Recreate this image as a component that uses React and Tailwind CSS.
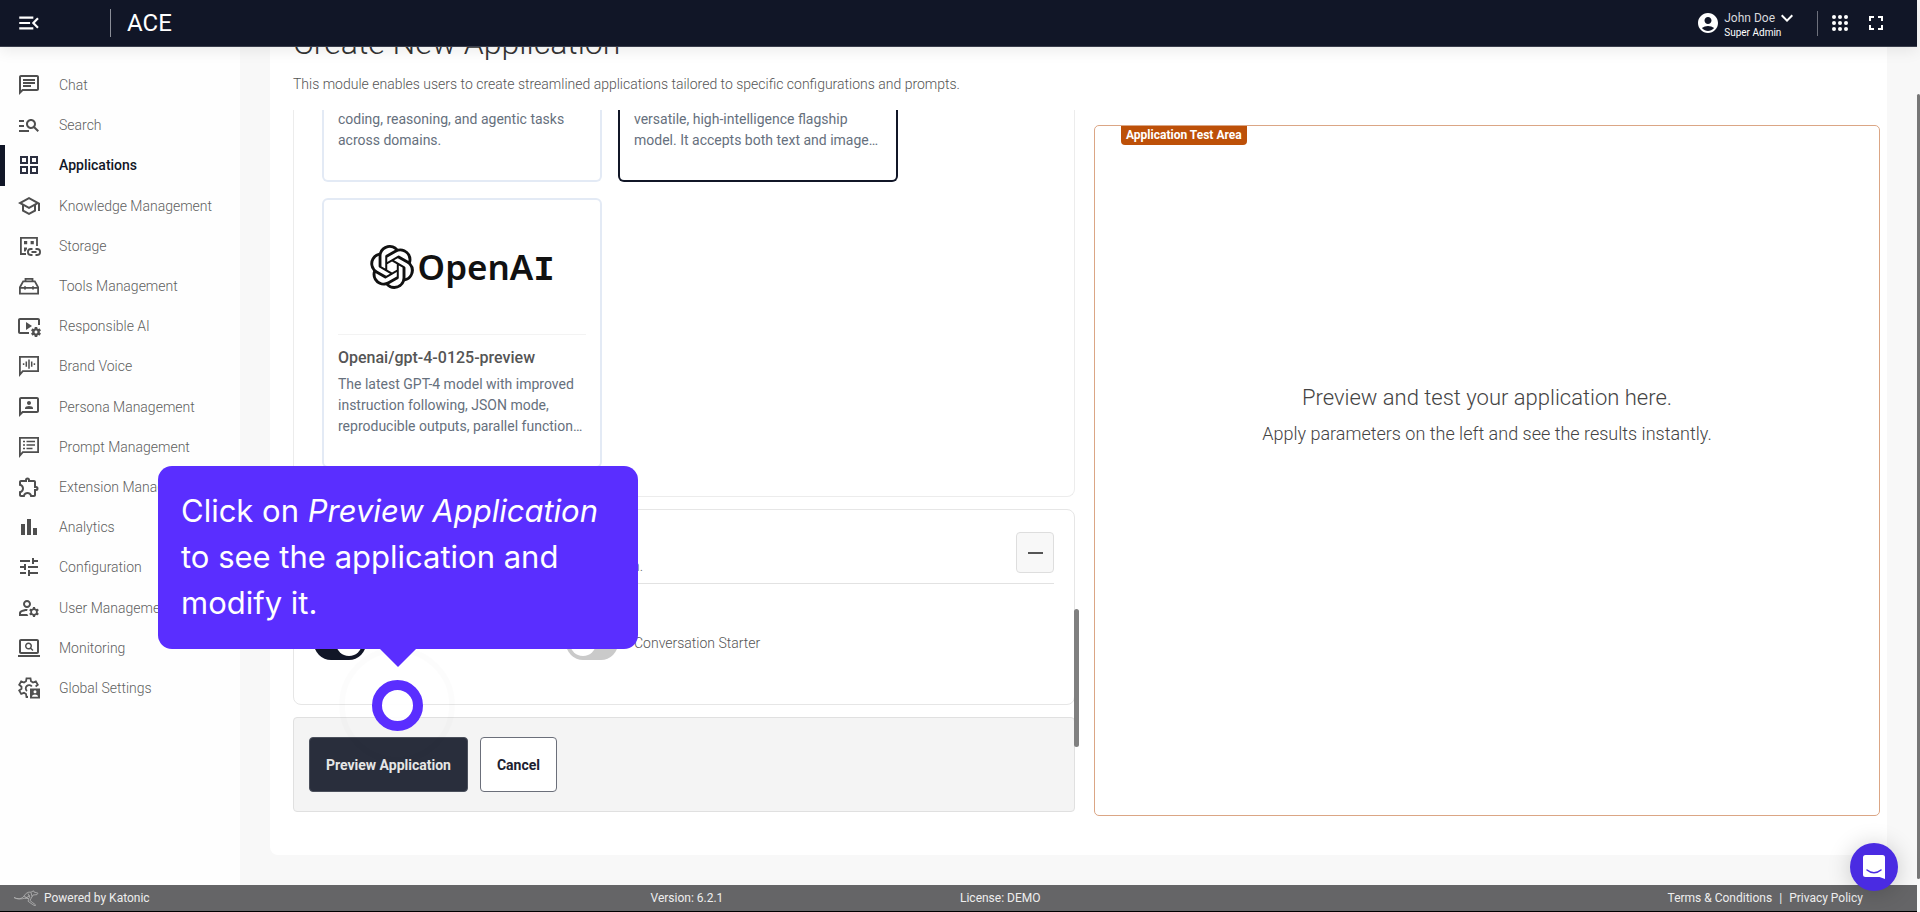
import React, { useState } from 'react';
import {
  MdMenuOpen,
  MdOutlineChat,
  MdManageSearch,
  MdOutlineGridView,
  MdOutlineSchool,
  MdOutlineVideoSettings,
  MdOutline3P,
  MdOutlineExtension,
  MdBarChart,
  MdTune,
  MdOutlineManageAccounts,
  MdOutlineScreenSearchDesktop,
  MdAccountCircle,
  MdKeyboardArrowDown,
  MdFullscreen,
} from 'react-icons/md';
import { SiOpenai } from 'react-icons/si';

const StorageIcon = ({ className }) => (
  <svg viewBox="0 0 24 24" className={className} fill="none" stroke="currentColor" strokeWidth="1.8">
    <path d="M20 12V3.9H3.9V20H9" />
    <path d="M7 7h3.2v3.2H7zM13.6 7h3.2v3.2h-3.2zM7 13.5h3v1.5l-1.5 2.500H7z" fill="currentColor" stroke="none" />
    <path d="M15.500 15h-1.600a3 3 0 0 0 0 6h1.600M18.500 15h1.600a3 3 0 0 1 0 6h-1.600M14.500 18h5" />
  </svg>
);

const ToolboxIcon = ({ className }) => (
  <svg viewBox="0 0 24 24" className={className} fill="none" stroke="currentColor" strokeWidth="1.8">
    <path d="M2.900 19.600v-6.400L6.200 7.400h11.600l3.300 5.800v6.400zM8.500 7.400V4.900h7v2.500M2.900 13.800h18.200M8 12.200v3.200M16 12.200v3.200" />
  </svg>
);

const VoiceIcon = ({ className }) => (
  <svg viewBox="0 0 24 24" className={className} fill="none" stroke="currentColor" strokeWidth="1.8">
    <path d="M2.900 20.500V2.900h18.200v14.200H5.800z" />
    <path d="M6.600 9.200v1.800M9.300 7.500v5.200M12 5.500v9.200M14.700 7.500v5.200M17.400 9.200v1.800" strokeWidth="1.500" />
  </svg>
);

const PromptIcon = ({ className }) => (
  <svg viewBox="0 0 24 24" className={className} fill="none" stroke="currentColor" strokeWidth="1.8">
    <path d="M2.900 20.500V2.900h18.200v14.200H5.800z" />
    <path d="M6 6.500h2M6 10h2M6 13.500h2M9.500 6.500h8.500M9.500 10h8.500M9.500 13.500h6" strokeWidth="1.600" />
  </svg>
);

const GlobalSettingsIcon = ({ className }) => (
  <svg viewBox="0 0 24 24" className={className} fill="none" stroke="currentColor" strokeWidth="1.8">
    <path d="M11 21H9.500l-.5-3-2-1.200-2.800 1.100-2-3.400 2.300-1.800v-2L2.200 8.800l2-3.400L7 6.500l2-1.200.5-2.900h4l.5 2.900 2 1.200 2.800-1.100 2 3.400-2.200 1.700" />
    <path d="M10 15a3.300 3.300 0 1 1 4.800-4.400" />
    <path d="M13 12.500h10v10H13zM18 14.200a1.500 1.500 0 1 0 0 3 1.500 1.500 0 0 0 0-3zM15 20.800h6c0-1.600-1.500-2.300-3-2.300s-3 .7-3 2.300z" fill="currentColor" fillRule="evenodd" stroke="none" />
  </svg>
);

const KangarooIcon = ({ className }) => (
  <svg viewBox="0 0 26 16" className={className} fill="none" stroke="currentColor" strokeWidth="0.8">
    <path d="M1 7.500c4 2 8 1.500 10-1.500 1.500-2.500 4-4.500 7-3.800l2.500-1.400.5 1.200 4 1.200-1 1.400-4 .4-1.700 3-1.300 2.500 2.500 2 3 2.300-.5 1.200-4-2.600-3-2.200 1-2.500-3.500-.7c-4 1.200-8.500 1.500-11.500-.5z" />
    <path d="M11 6l4 2.500M15 3.500l2 4.500M18 2.500l1 4M12 8.500l5-3" />
  </svg>
);

const navItems = [
  { label: 'Chat', icon: MdOutlineChat },
  { label: 'Search', icon: MdManageSearch },
  { label: 'Applications', icon: MdOutlineGridView, active: true },
  { label: 'Knowledge Management', icon: MdOutlineSchool },
  { label: 'Storage', icon: StorageIcon },
  { label: 'Tools Management', icon: ToolboxIcon },
  { label: 'Responsible AI', icon: MdOutlineVideoSettings },
  { label: 'Brand Voice', icon: VoiceIcon },
  { label: 'Persona Management', icon: MdOutline3P },
  { label: 'Prompt Management', icon: PromptIcon },
  { label: 'Extension Management', icon: MdOutlineExtension },
  { label: 'Analytics', icon: MdBarChart },
  { label: 'Configuration', icon: MdTune },
  { label: 'User Management', icon: MdOutlineManageAccounts },
  { label: 'Monitoring', icon: MdOutlineScreenSearchDesktop },
  { label: 'Global Settings', icon: GlobalSettingsIcon },
];

function Header() {
  return (
    <header className="relative z-10 flex h-[47px] shrink-0 items-center border-b border-[#3a3e4c] bg-[#111627] text-white shadow-[0_4px_14px_rgba(0,0,0,0.08)]">
      <button aria-label="Collapse menu" className="ml-4">
        <MdMenuOpen className="h-[26px] w-[26px]" />
      </button>
      <div className="ml-[68px] h-7 w-px bg-[#8b8e98]" />
      <span className="ml-4 text-2xl">ACE</span>
      <div className="ml-auto flex items-center">
        <MdAccountCircle className="h-6 w-6" />
        <button className="ml-1 mt-1 text-left">
          <span className="flex h-4 items-center text-xs text-[#d8d9dd]">
            John Doe
            <MdKeyboardArrowDown className="h-6 w-6 text-white" />
          </span>
          <span className="block text-[10px] leading-[14px]">Super Admin</span>
        </button>
        <div className="ml-[18px] h-[25px] w-px bg-[#6d707c]" />
        <button aria-label="Apps" className="ml-[14px]">
          <svg viewBox="0 0 16 16" className="h-4 w-4" fill="currentColor">
            {[2, 8, 14].map((y) => [2, 8, 14].map((x) => <circle key={`${x}-${y}`} cx={x} cy={y} r="2" />))}
          </svg>
        </button>
        <button aria-label="Full screen" className="ml-4 mr-[29px]">
          <MdFullscreen className="h-6 w-6" />
        </button>
      </div>
    </header>
  );
}

function Sidebar() {
  return (
    <nav className="w-60 shrink-0 bg-[#fefefe] pt-[18px]">
      <div className="flex h-[643px] flex-col">
        {navItems.map(({ label, icon: Icon, active }) => (
          <a
            key={label}
            href="#"
            className={`flex flex-1 items-center border-l-[5px] pl-3 text-sm ${
              active ? 'border-[#111627] font-medium text-[#111627]' : 'border-transparent font-light text-[#5f5f5f]'
            }`}
          >
            <Icon className={`h-6 w-6 shrink-0 ${active ? 'text-[#2c3040]' : 'text-[#4f4f4f]'}`} />
            <span className="ml-[18px] whitespace-nowrap">{label}</span>
          </a>
        ))}
      </div>
    </nav>
  );
}

function Toggle({ id, label, defaultOn }) {
  const [on, setOn] = useState(defaultOn);
  return (
    <div className="flex w-[252px] items-center gap-4">
      <input
        id={id}
        type="checkbox"
        role="switch"
        checked={on}
        onChange={() => setOn(!on)}
        className="h-[34px] w-[52px] shrink-0 appearance-none rounded-full bg-[#cacaca] p-1 before:block before:h-[26px] before:w-[26px] before:rounded-full before:bg-white checked:bg-[#111627] checked:before:ml-[18px]"
      />
      <label htmlFor={id} className="whitespace-nowrap text-sm font-light text-[#555]">
        {label}
      </label>
    </div>
  );
}

function ModelGrid() {
  return (
    <section className="rounded-b-lg border border-t-0 border-[#ececec] pb-7 pl-7">
      <div className="grid grid-cols-[280px_280px] gap-4 text-sm leading-[21px] text-[#66707d]">
        <div className="h-[72px] rounded-b-md border-2 border-t-0 border-[#e3eaf5] px-[14px]">
          <p className="-mt-px">coding, reasoning, and agentic tasks across domains.</p>
        </div>
        <div className="h-[72px] rounded-b-md border-2 border-t-0 border-[#111627] px-[14px]">
          <p className="-mt-px">versatile, high-intelligence flagship model. It accepts both text and image…</p>
        </div>
        <div className="rounded-md border-2 border-[#e3eaf5] px-[14px] pb-[29px]">
          <div className="flex h-[135px] items-center justify-center gap-1 border-b border-[#f3f3f3] text-[#111]">
            <SiOpenai className="h-11 w-11" />
            <span className="mt-1 font-['Noto_Sans',sans-serif] text-[35px] font-semibold leading-none">
              OpenA<span className="font-['Liberation_Mono',monospace] font-bold">I</span>
            </span>
          </div>
          <h3 className="mt-[11px] text-base font-medium leading-6 text-[#555]">Openai/gpt-4-0125-preview</h3>
          <p className="mt-1">
            The latest GPT-4 model with improved instruction following, JSON mode, reproducible outputs, parallel function…
          </p>
        </div>
      </div>
    </section>
  );
}

function OptionsPanel() {
  return (
    <section className="mt-3 rounded-lg border border-[#e6e6e6] px-5 pb-11 pt-[22px]">
      <div className="flex items-start justify-between border-b border-[#e2e2e2] pb-[7px]">
        <div>
          <h2 className="text-lg font-normal leading-6 text-[#444]">Advanced Features</h2>
          <p className="text-sm font-light text-[#666]">Turn on and off the extra features for your application.</p>
        </div>
        <button
          aria-label="Collapse section"
          className="flex h-[41px] w-[38px] items-center justify-center rounded border border-[#dedede] bg-[#f8f8f8]"
        >
          <span className="h-0.5 w-[15px] bg-[#555]" />
        </button>
      </div>
      <div className="mt-[42px] flex">
        <Toggle id="feedback" label="Feedback" defaultOn />
        <Toggle id="starter" label="Conversation Starter" defaultOn={false} />
      </div>
    </section>
  );
}

function Callout() {
  return (
    <div className="absolute left-[158px] top-[466px] z-20 w-[480px]">
      <div className="rounded-[14px] bg-[#5a2eff] px-[23px] pb-[23px] pt-[22px] font-['Inter',sans-serif] text-[31px] leading-[46px] text-white">
        Click on <em>Preview Application</em> to see the application and modify it.
      </div>
      <svg viewBox="0 0 36 18" className="mx-auto h-[18px] w-9" fill="#5a2eff">
        <path d="M0 0h36L18 18z" />
      </svg>
      <div className="absolute left-[181px] top-[181px] -z-10 h-[116px] w-[116px] rounded-full border-[6px] border-black/1" />
      <div className="absolute left-[214px] top-[214px] h-[51px] w-[51px] rounded-full border-[10px] border-[#5a2eff] bg-white/90" />
    </div>
  );
}

function Footer() {
  return (
    <footer className="flex h-[27px] shrink-0 items-center border-b border-black bg-[#656567] text-xs text-[#eee]">
      <div className="flex flex-1 items-center">
        <KangarooIcon className="ml-[13px] h-4 w-[26px] text-[#b5b5b5]" />
        <span className="ml-[5px]">Powered by Katonic</span>
      </div>
      <div className="flex w-[620px] justify-between pl-[29px] pr-[201px]">
        <span>Version: 6.2.1</span>
        <span>License: DEMO</span>
      </div>
      <div className="flex flex-1 justify-end gap-[7px] pr-[54px]">
        <a href="#">Terms &amp; Conditions</a>
        <span>|</span>
        <a href="#">Privacy Policy</a>
      </div>
    </footer>
  );
}

export default function App() {
  return (
    <div className="relative flex h-screen overflow-hidden bg-[#f8f8f8] font-['Roboto',sans-serif]">
      <div className="flex min-w-0 flex-1 flex-col">
        <Header />
        <div className="flex min-h-0 flex-1">
          <Sidebar />
          <main className="mx-[30px] mb-[30px] flex min-w-0 flex-1 flex-col overflow-hidden rounded-b-lg bg-white pl-[23px] pr-[7px]">
            <h1 className="-mt-6 text-[32px] font-light leading-10 text-[#333]">Create New Application</h1>
            <p className="mt-[11px] text-sm font-light text-[#555]">
              This module enables users to create streamlined applications tailored to specific configurations and prompts.
            </p>
            <div className="mt-4 flex min-h-0 flex-1 pb-[39px]">
              <div className="flex min-w-0 flex-1">
                <div className="min-w-0 flex-1">
                  <ModelGrid />
                  <OptionsPanel />
                  <div className="mt-3 flex gap-3 rounded border border-[#e0e0e0] bg-[#f4f4f4] px-[15px] py-[19px]">
                    <button className="h-[55px] rounded border border-[#4b505c] bg-[#292e3c] px-4 text-sm font-bold text-[#e6e6e6]">
                      Preview Application
                    </button>
                    <button className="h-[55px] rounded border border-[#6b6f7a] bg-white px-4 text-sm font-bold text-[#1c2130]">
                      Cancel
                    </button>
                  </div>
                </div>
                <div className="-ml-px mt-[499px] h-[138px] w-[5px] shrink-0 rounded-sm bg-[#808080]" />
              </div>
              <section className="ml-[15px] mt-[15px] flex w-[786px] shrink-0 flex-col rounded-[5px] border border-[#dba685]">
                <span className="ml-[26px] self-start rounded-b bg-[#bd5008] px-[5px] text-xs font-bold leading-[19px] text-white">
                  Application Test Area
                </span>
                <div className="flex flex-1 flex-col items-center justify-center pb-[129px] font-light text-[#444]">
                  <p className="text-[22px] leading-9">Preview and test your application here.</p>
                  <p className="text-lg leading-9">Apply parameters on the left and see the results instantly.</p>
                </div>
              </section>
            </div>
          </main>
        </div>
        <Footer />
      </div>
      <div className="w-[3px] shrink-0 bg-[#f8f8f8] pt-[94px]">
        <div className="h-[785px] rounded-sm bg-[#777]" />
      </div>
      <Callout />
      <button
        aria-label="Open messenger"
        className="absolute bottom-[21px] right-[22px] z-20 flex h-12 w-12 items-center justify-center rounded-full bg-[#4a2be2] shadow-[0_2px_24px_rgba(0,0,0,0.2)]"
      >
        <svg viewBox="0 0 22 24" className="h-6 w-[22px]">
          <path d="M2.500 0h17A2.500 2.500 0 0 1 22 2.500V24l-5.500-2h-14A2.500 2.500 0 0 1 0 19.500v-17A2.500 2.500 0 0 1 2.500 0z" fill="#fff" />
          <path d="M4 15c4 3.500 10 3.500 14 0" fill="none" stroke="#4a2be2" strokeWidth="1.500" strokeLinecap="round" />
        </svg>
      </button>
    </div>
  );
}
